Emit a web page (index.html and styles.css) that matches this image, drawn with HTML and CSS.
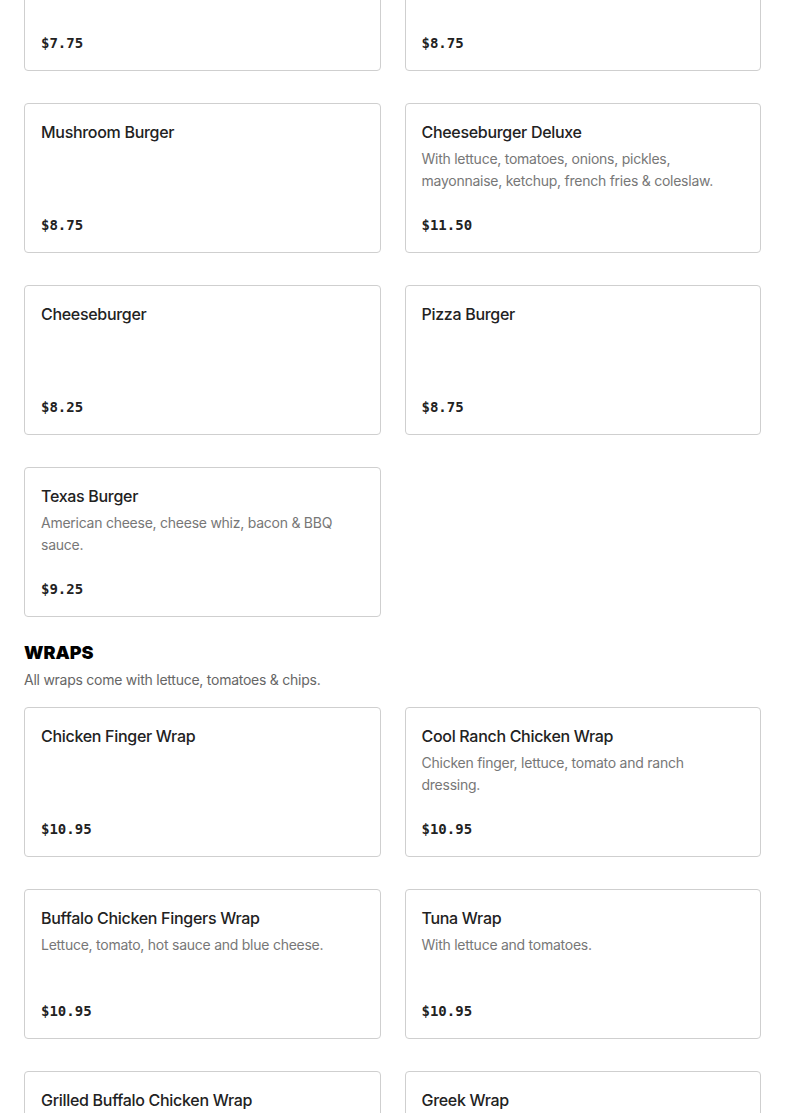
FILE: index.html
```html
<!DOCTYPE html>
<html lang="en">
<head>
<meta charset="utf-8">
<title>Menu</title>
<link rel="stylesheet" href="styles.css">
</head>
<body>
<main class="menu">
  <section class="section section-first">
    <div class="grid">
      <div class="card">
        <h3 class="item-name">Bacon Burger</h3>
        <div class="price">$7.75</div>
      </div>
      <div class="card">
        <h3 class="item-name">Onion Burger</h3>
        <div class="price">$8.75</div>
      </div>
      <div class="card">
        <h3 class="item-name">Mushroom Burger</h3>
        <div class="price">$8.75</div>
      </div>
      <div class="card">
        <h3 class="item-name">Cheeseburger Deluxe</h3>
        <p class="desc">With lettuce, tomatoes, onions, pickles, mayonnaise, ketchup, french fries &amp; coleslaw.</p>
        <div class="price">$11.50</div>
      </div>
      <div class="card">
        <h3 class="item-name">Cheeseburger</h3>
        <div class="price">$8.25</div>
      </div>
      <div class="card">
        <h3 class="item-name">Pizza Burger</h3>
        <div class="price">$8.75</div>
      </div>
      <div class="card">
        <h3 class="item-name">Texas Burger</h3>
        <p class="desc">American cheese, cheese whiz, bacon &amp; BBQ sauce.</p>
        <div class="price">$9.25</div>
      </div>
    </div>
  </section>

  <section class="section">
    <h2 class="section-title">WRAPS</h2>
    <p class="section-note">All wraps come with lettuce, tomatoes &amp; chips.</p>
    <div class="grid">
      <div class="card">
        <h3 class="item-name">Chicken Finger Wrap</h3>
        <div class="price">$10.95</div>
      </div>
      <div class="card">
        <h3 class="item-name">Cool Ranch Chicken Wrap</h3>
        <p class="desc">Chicken finger, lettuce, tomato and ranch dressing.</p>
        <div class="price">$10.95</div>
      </div>
      <div class="card">
        <h3 class="item-name">Buffalo Chicken Fingers Wrap</h3>
        <p class="desc">Lettuce, tomato, hot sauce and blue cheese.</p>
        <div class="price">$10.95</div>
      </div>
      <div class="card">
        <h3 class="item-name">Tuna Wrap</h3>
        <p class="desc">With lettuce and tomatoes.</p>
        <div class="price">$10.95</div>
      </div>
      <div class="card">
        <h3 class="item-name">Grilled Buffalo Chicken Wrap</h3>
        <div class="price">$10.95</div>
      </div>
      <div class="card">
        <h3 class="item-name">Greek Wrap</h3>
        <div class="price">$10.95</div>
      </div>
    </div>
  </section>
</main>
</body>
</html>
```

FILE: styles.css
```css
* {
  box-sizing: border-box;
}

html, body {
  margin: 0;
  padding: 0;
  background: #ffffff;
}

body {
  font-family: Inter, "Liberation Sans", Arial, sans-serif;
  color: #222222;
  overflow: hidden;
  height: 1113px;
}

.menu {
  padding: 0 24px;
}

.section-first {
  margin-top: -79px;
}

.section {
  margin-bottom: 24px;
}

.grid {
  display: grid;
  grid-template-columns: 1fr 1fr;
  column-gap: 24px;
  row-gap: 32px;
}

.card {
  display: flex;
  flex-direction: column;
  min-height: 150px;
  padding: 16px 16px 17px;
  border: 1px solid #cfcfcf;
  border-radius: 4px;
  background: #fff;
}

.item-name {
  margin: 0 0 4px;
  font-size: 16px;
  line-height: 24px;
  font-weight: 500;
  letter-spacing: -0.3px;
  color: #222222;
}

.desc {
  margin: 0;
  font-size: 14px;
  line-height: 22px;
  letter-spacing: -0.25px;
  color: #777777;
}

.price {
  margin-top: auto;
  font-family: "DejaVu Sans Mono", "Liberation Mono", monospace;
  font-weight: 700;
  font-size: 14px;
  line-height: 20px;
  color: #222222;
}

.section-title {
  margin: 0;
  font-size: 18px;
  line-height: 24px;
  font-weight: 900;
  color: #000;
}

.section-note {
  margin: 4px 0 16px;
  font-size: 14px;
  line-height: 22px;
  letter-spacing: -0.25px;
  color: #666666;
}
```
